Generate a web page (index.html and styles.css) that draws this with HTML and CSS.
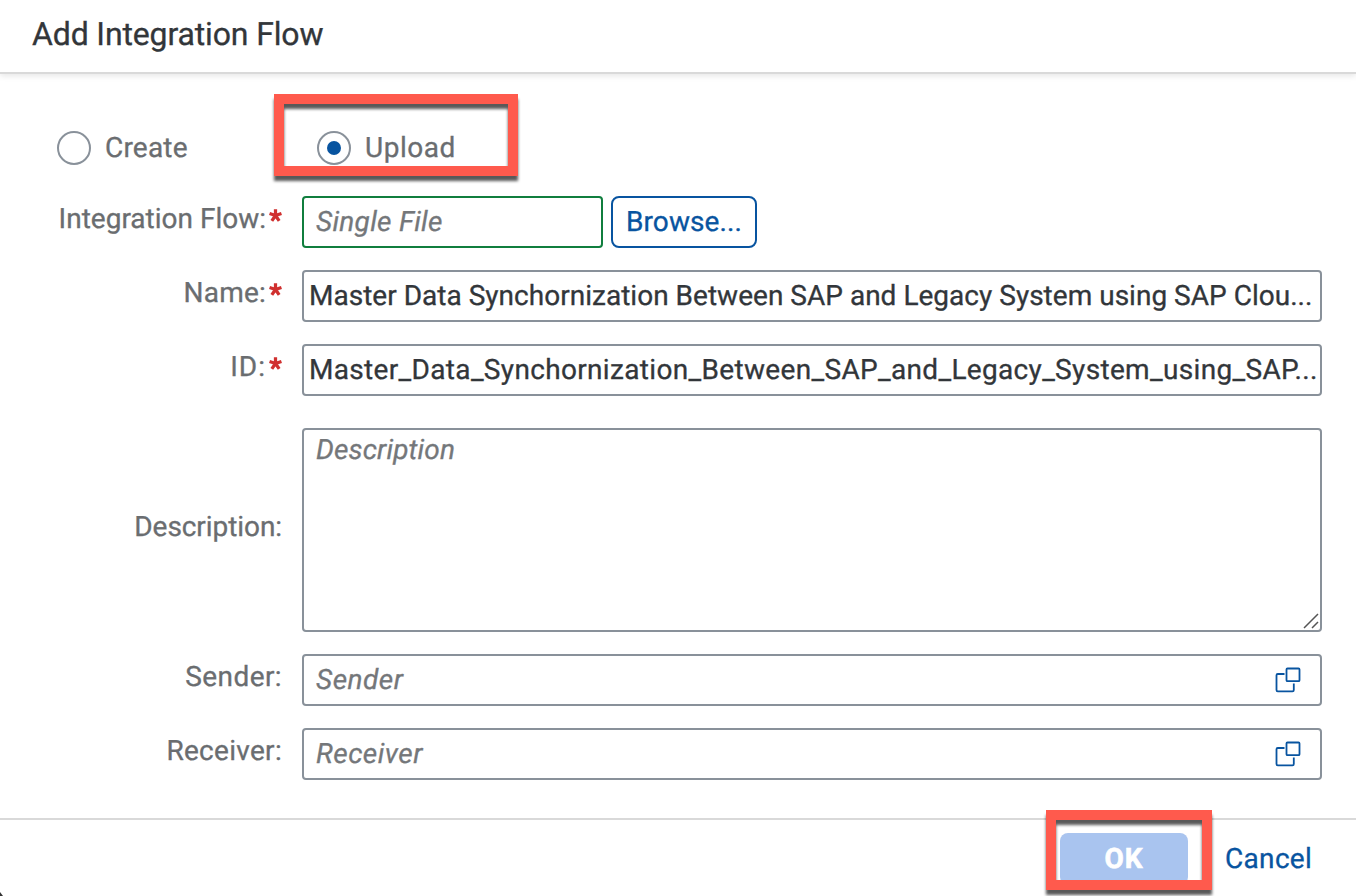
FILE: index.html
```html
<!DOCTYPE html>
<html lang="en">
<head>
<meta charset="utf-8">
<title>Add Integration Flow</title>
<link rel="stylesheet" href="styles.css">
</head>
<body>
<div class="dialog">
  <header class="dialog-header"><h1 class="title">Add Integration Flow</h1></header>
  <main class="form">
    <div class="radio-row">
      <div class="radio"><span class="radio-circle"></span><span class="radio-text create">Create</span></div>
      <div class="radio"><span class="radio-circle selected"></span><span class="radio-text upload">Upload</span><span class="highlight highlight-upload"></span></div>
    </div>
    <div class="row">
      <div class="label flow-label">Integration Flow:<svg class="star" viewBox="0 0 12 12"><path d="M6 6V.2M6 6 .5 4.2M6 6l5.500-1.800M6 6l-3.400 5M6 6l3.400 5"/></svg></div>
      <div class="file-group">
        <div class="field file-field"><span class="placeholder single">Single File</span></div>
        <div class="browse">Browse...</div>
      </div>
    </div>
    <div class="row">
      <div class="label name-label">Name:<svg class="star" viewBox="0 0 12 12"><path d="M6 6V.2M6 6 .5 4.2M6 6l5.500-1.800M6 6l-3.400 5M6 6l3.400 5"/></svg></div>
      <div class="field"><span class="value name-value">Master Data Synchornization Between SAP and Legacy System using SAP Clou...</span></div>
    </div>
    <div class="row">
      <div class="label id-label">ID:<svg class="star" viewBox="0 0 12 12"><path d="M6 6V.2M6 6 .5 4.2M6 6l5.500-1.800M6 6l-3.400 5M6 6l3.400 5"/></svg></div>
      <div class="field"><span class="value id-value">Master_Data_Synchornization_Between_SAP_and_Legacy_System_using_SAP...</span></div>
    </div>
    <div class="row row-description">
      <div class="label description-label">Description:</div>
      <div class="field textarea"><span class="placeholder description">Description</span>
        <svg class="grip" viewBox="0 0 16 16"><path d="M1 15 15 1M9 15l6-6"/></svg>
      </div>
    </div>
    <div class="row">
      <div class="label sender-label">Sender:</div>
      <div class="field"><span class="placeholder party">Sender</span>
        <svg class="value-help" viewBox="0 0 26 26"><path d="M9.5 7H2.8Q1.5 7 1.500 8.300V23Q1.500 24.300 2.800 24.300H17.500Q18.800 24.300 18.800 23V16.500"/><rect x="11.500" y="1.500" width="13" height="12.700" rx="1"/></svg>
      </div>
    </div>
    <div class="row">
      <div class="label receiver-label">Receiver:</div>
      <div class="field"><span class="placeholder party">Receiver</span>
        <svg class="value-help" viewBox="0 0 26 26"><path d="M9.5 7H2.8Q1.5 7 1.500 8.300V23Q1.500 24.300 2.800 24.300H17.500Q18.800 24.300 18.800 23V16.500"/><rect x="11.500" y="1.500" width="13" height="12.700" rx="1"/></svg>
      </div>
    </div>
  </main>
  <footer class="dialog-footer">
    <div class="ok"><span class="ok-text">OK</span><span class="highlight highlight-ok"></span></div>
    <div class="cancel">Cancel</div>
  </footer>
  <span class="corner"></span>
</div>
</body>
</html>
```
FILE: styles.css
```css
* { box-sizing: border-box; }

body {
  margin: 0;
  background: #fff;
  font: 28px/36px Roboto, "Liberation Sans", sans-serif;
  color: #32363a;
  -webkit-text-stroke: .3px currentColor;
  text-rendering: geometricPrecision;
  overflow: hidden;
}

.dialog {
  position: relative;
  display: flex;
  flex-direction: column;
  height: 896px;
  overflow: hidden;
}

.dialog-header {
  height: 74px;
  flex: none;
  padding: 14px 32px 0;
  border-bottom: 2px solid #d9d9d9;
  box-shadow: 0 2px 6px rgba(0, 0, 0, .1);
}

.title {
  margin: 0;
  font-size: 32px;
  font-weight: 400;
  line-height: 40px;
  letter-spacing: -.14px;
}

.form {
  height: 744px;
  flex: none;
  padding: 48px 34px 0 50px;
  display: flex;
  flex-direction: column;
  gap: 22px;
}

.radio-row {
  display: flex;
  height: 52px;
  padding-left: 7px;
}

.radio {
  position: relative;
  display: flex;
  align-items: center;
  gap: 14px;
  width: 260px;
  color: #6a6d70;
}

.radio-circle {
  display: grid;
  place-items: center;
  width: 34px;
  height: 34px;
  border: 2px solid #89919a;
  border-radius: 50%;
}

.selected::before {
  content: "";
  width: 14px;
  height: 14px;
  border-radius: 50%;
  background: #0854a0;
}

.create { letter-spacing: .2px; }
.upload { letter-spacing: .5px; }

.highlight {
  position: absolute;
  border: 10px solid #ff5a4d;
  filter: drop-shadow(0 5px 1.500px rgba(0, 0, 0, .65));
  z-index: 1;
}

.highlight-upload {
  left: -43px;
  top: -28px;
  width: 244px;
  height: 82px;
}

.row {
  display: grid;
  grid-template-columns: 232px 1020px;
  column-gap: 20px;
}

.row-description { margin-top: 10px; }

.label {
  display: flex;
  justify-content: flex-end;
  align-items: center;
  padding-bottom: 7px;
  color: #6a6d70;
  white-space: nowrap;
}

.flow-label { letter-spacing: 0; }
.name-label { letter-spacing: .2px; }
.id-label { letter-spacing: 1px; }
.description-label { letter-spacing: -.07px; }
.sender-label { letter-spacing: .4px; }
.receiver-label { letter-spacing: .3px; }

.star {
  width: 13px;
  height: 13px;
  margin: -7px 0 0 3px;
  fill: none;
  stroke: #d0302f;
  stroke-width: 3;
}

.field {
  position: relative;
  display: flex;
  align-items: center;
  justify-content: space-between;
  height: 52px;
  padding: 0 19px 0 12px;
  border: 2px solid #89919a;
  border-radius: 4px;
}

.value {
  margin: 0 -19px 0 -7px;
  white-space: nowrap;
}

.name-value { letter-spacing: .017px; }
.id-value { letter-spacing: .332px; }

.placeholder {
  color: #74777a;
  font-style: italic;
}

.single { letter-spacing: .29px; }
.description { letter-spacing: .15px; }
.party { letter-spacing: .5px; }

.file-group {
  display: flex;
  gap: 8px;
}

.file-field {
  width: 301px;
  border-color: #107e3e;
}

.browse {
  display: grid;
  place-items: center;
  width: 146px;
  height: 52px;
  border: 2px solid #0854a0;
  border-radius: 8px;
  color: #0854a0;
  letter-spacing: .1px;
}

.textarea {
  height: 204px;
  align-items: flex-start;
  padding-top: 2px;
}

.grip {
  position: absolute;
  right: 1px;
  bottom: 1px;
  width: 16px;
  height: 16px;
  fill: none;
  stroke: #555;
  stroke-width: 1.500;
}

.value-help {
  width: 26px;
  height: 26px;
  fill: none;
  stroke: #0854a0;
  stroke-width: 1.800;
}

.dialog-footer {
  flex: 1;
  display: flex;
  justify-content: space-between;
  padding: 13px 0 0 1060px;
  border-top: 2px solid #d9d9d9;
}

.ok {
  position: relative;
  display: grid;
  place-items: center;
  flex: none;
  width: 128px;
  height: 52px;
  border-radius: 8px;
  background: #a9c4ef;
  color: #fff;
  font-weight: 700;
}

.ok-text {
  letter-spacing: 1px;
  -webkit-text-stroke-width: .6px;
}

.highlight-ok {
  left: -14px;
  top: -23px;
  width: 166px;
  height: 80px;
}

.cancel {
  width: 131px;
  height: 52px;
  line-height: 52px;
  color: #0854a0;
  letter-spacing: .32px;
}

/* Backdrop showing past the rounded dialog corner */
.corner {
  position: absolute;
  left: 0;
  bottom: 0;
  width: 3px;
  height: 4px;
  background: #333;
  clip-path: polygon(0 0, 100% 100%, 0 100%);
}
```
